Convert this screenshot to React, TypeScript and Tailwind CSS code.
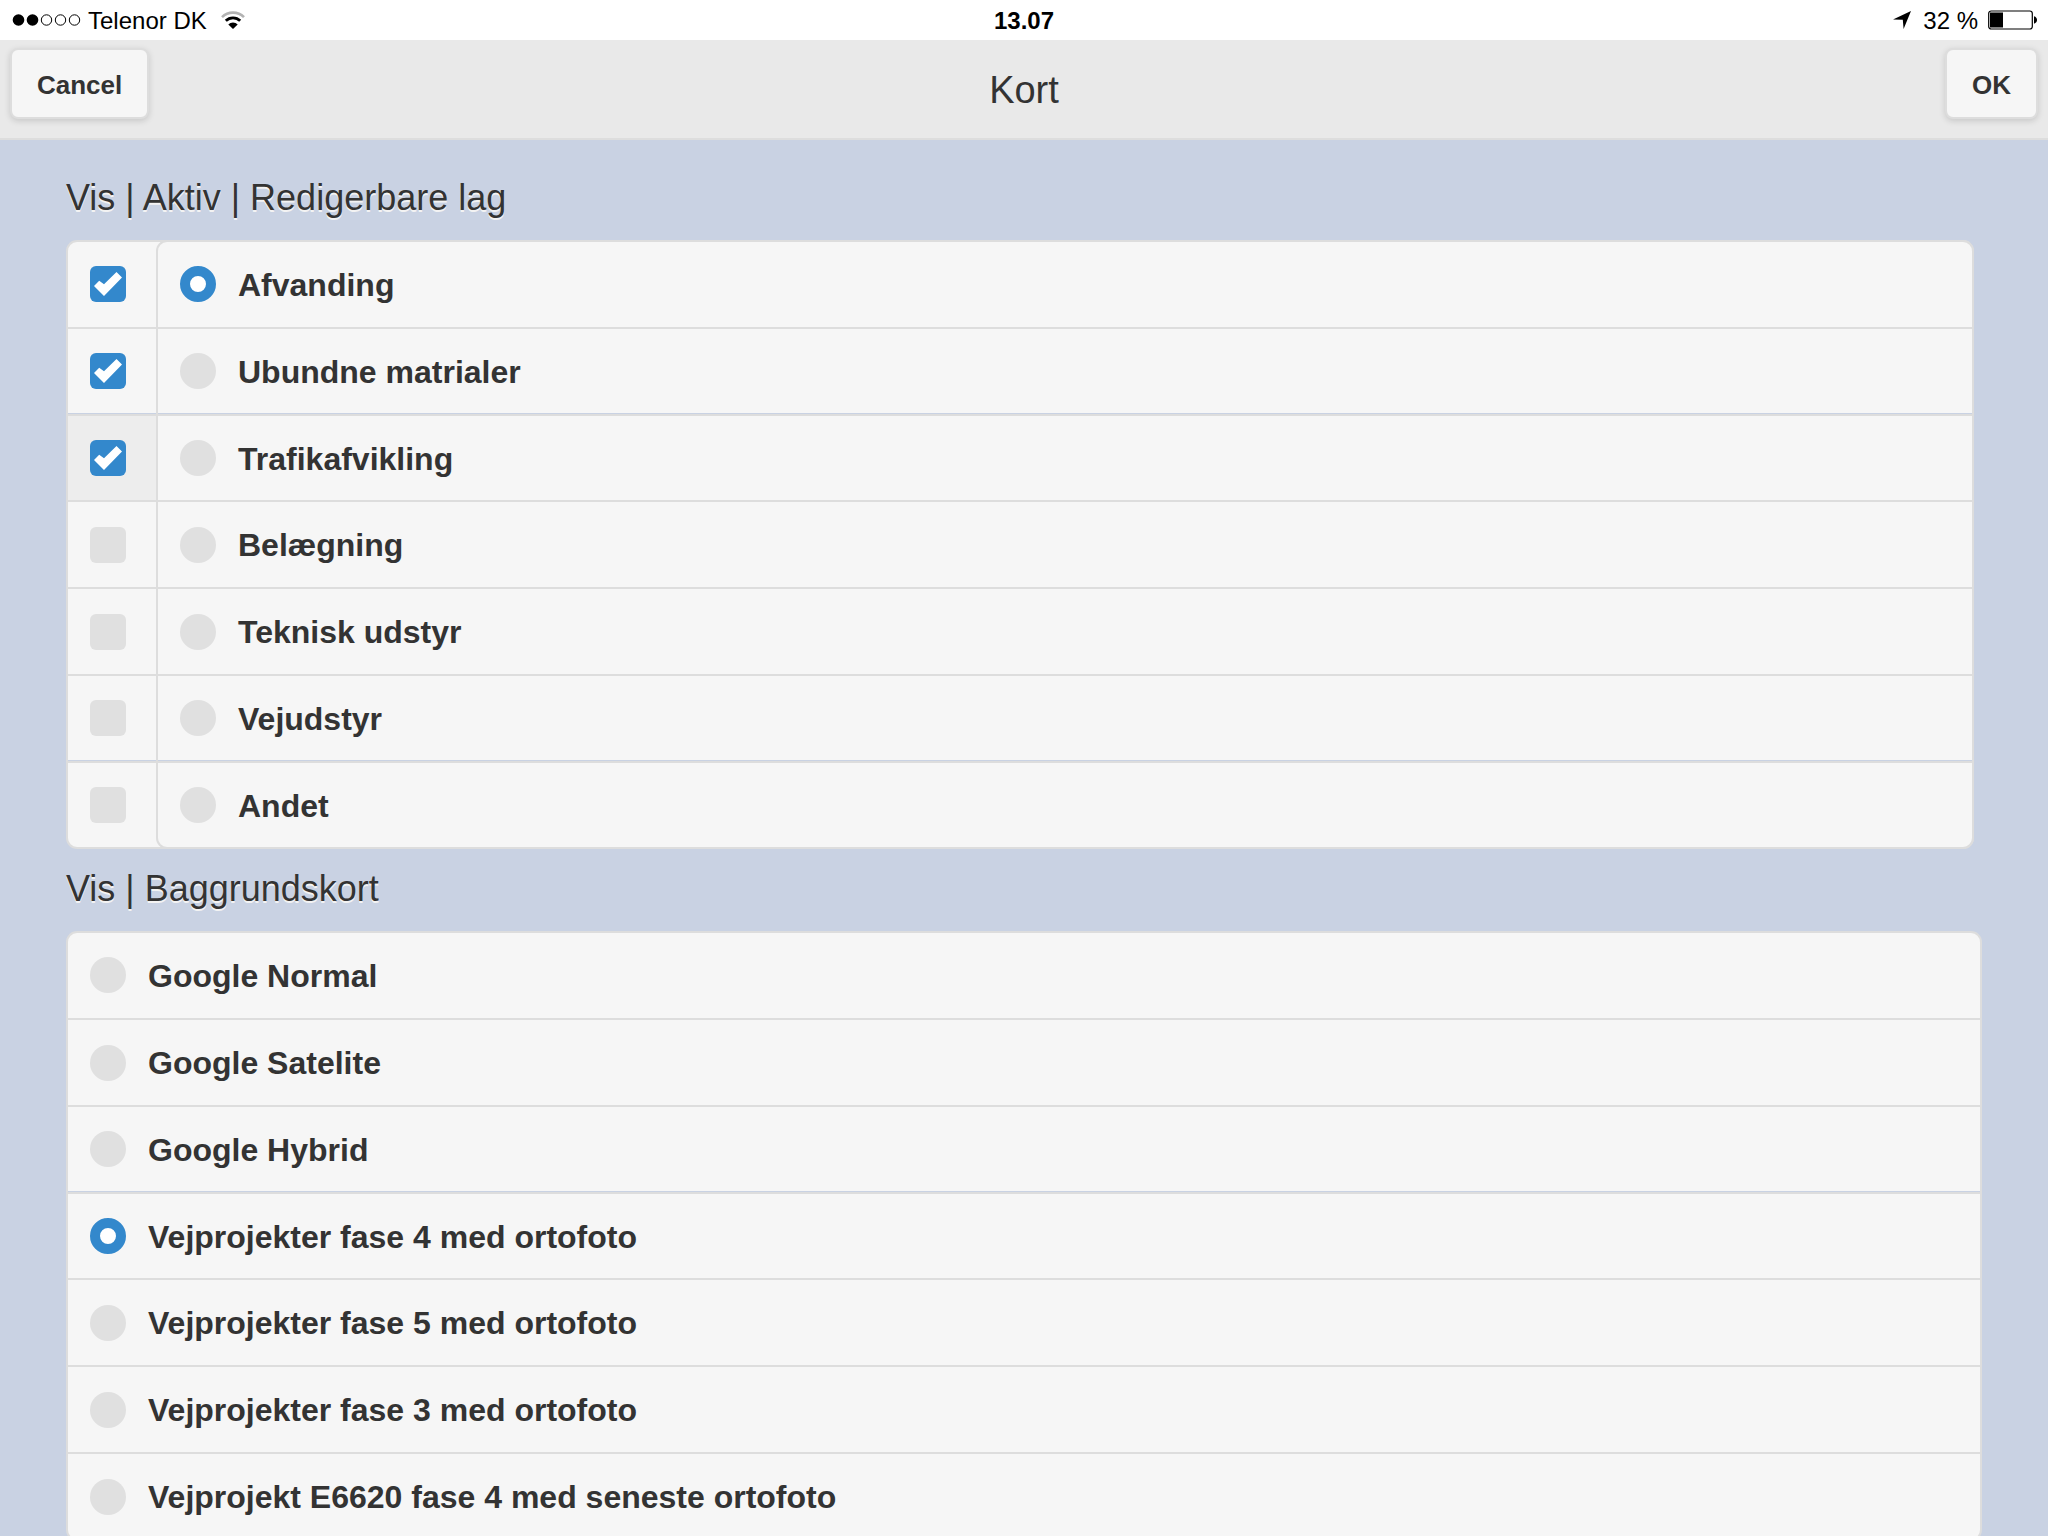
// Map settings screen: editable layers on top, background maps below.

import { useState } from 'react';
import clsx from 'clsx';

type Option = {
  id: string;
  label: string;
  // seam rows end in a hairline of the page colour
  seam?: boolean;
  short?: boolean;
};

const LAYERS: Option[] = [
  { id: 'afvanding', label: 'Afvanding' },
  { id: 'ubundne', label: 'Ubundne matrialer', seam: true },
  { id: 'trafik', label: 'Trafikafvikling', short: true },
  { id: 'belaegning', label: 'Belægning' },
  { id: 'teknisk', label: 'Teknisk udstyr' },
  { id: 'vejudstyr', label: 'Vejudstyr', seam: true },
  { id: 'andet', label: 'Andet', short: true },
];

const BACKGROUNDS: Option[] = [
  { id: 'g-normal', label: 'Google Normal' },
  { id: 'g-satelite', label: 'Google Satelite' },
  { id: 'g-hybrid', label: 'Google Hybrid', seam: true },
  { id: 'fase4', label: 'Vejprojekter fase 4 med ortofoto', short: true },
  { id: 'fase5', label: 'Vejprojekter fase 5 med ortofoto' },
  { id: 'fase3', label: 'Vejprojekter fase 3 med ortofoto' },
  { id: 'e6620', label: 'Vejprojekt E6620 fase 4 med seneste ortofoto' },
];

function rowClass(option: Option, first: boolean) {
  return clsx(
    'flex items-center pl-[22px] cursor-pointer',
    // the first row has the panel's own border above it
    first && 'h-[85px] pb-px',
    !first && 'border-t-2 border-t-[#dddddd]',
    !first && (option.short ? 'h-[86px]' : 'h-[87px]'),
    option.seam && 'border-b border-b-[#c9d2e3]',
  );
}

function StatusBar() {
  return (
    <div className="grid grid-cols-3 items-center h-10 bg-white text-black text-[24px] leading-[38px]">
      <div className="flex items-center pl-3">
        <svg width="70" height="14" viewBox="0 0 70 14" aria-hidden="true">
          <circle cx="6.5" cy="7" r="5.8" />
          <circle cx="20.5" cy="7" r="5.8" />
          <g fill="none" stroke="#000" strokeWidth="1">
            <circle cx="34.5" cy="7" r="5.2" />
            <circle cx="48.5" cy="7" r="5.2" />
            <circle cx="62.5" cy="7" r="5.2" />
          </g>
        </svg>
        <span className="ml-1.5 pt-0.5">Telenor DK</span>
        <svg className="ml-3.5" width="24" height="18" viewBox="0 0 24 18" aria-hidden="true">
          <path d="M1 6.2 A15.5 15.5 0 0 1 23 6.2" fill="none" stroke="#b3b3b3" strokeWidth="2.6" />
          <path d="M4.8 9.8 A10.2 10.2 0 0 1 19.2 9.8" fill="none" stroke="#000" strokeWidth="2.8" />
          <path d="M12 18 L7.3 13.4 A6.7 6.7 0 0 1 16.7 13.4 Z" />
        </svg>
      </div>
      <div className="pt-0.5 text-center font-bold">13.07</div>
      <div className="flex items-center justify-end pr-[11px]">
        <svg width="18" height="18" viewBox="0 0 18 18" aria-hidden="true">
          <path d="M0 8.4 L18 0 L10.6 18 L9.8 8.8 Z" />
        </svg>
        <span className="ml-3 pt-0.5">32 %</span>
        <svg className="ml-2.5" width="49" height="20" viewBox="0 0 49 20" aria-hidden="true">
          <rect x="0.7" y="1" width="43.6" height="18" rx="2.5" fill="none" stroke="#000" strokeWidth="1.2" />
          <rect x="2" y="2.5" width="13" height="15" />
          <path d="M46 6.3 C50 7.5 50 12.5 46 13.7 Z" />
        </svg>
      </div>
    </div>
  );
}

function HeaderButton({ children }: { children: string }) {
  return (
    <button
      type="button"
      className="h-[71px] px-[25px] pt-0.5 rounded-lg border-2 border-[#dddddd] bg-[#f6f6f6] text-[26px] leading-8 font-bold shadow-[0_2px_6px_rgba(0,0,0,0.15)]"
    >
      {children}
    </button>
  );
}

function Header() {
  return (
    <header className="grid grid-cols-[1fr_auto_1fr] items-start h-[100px] px-2.5 pt-2 bg-[#e9e9e9] border-b-2 border-[#dddddd]">
      <div className="flex">
        <HeaderButton>Cancel</HeaderButton>
      </div>
      <h1 className="pt-5 text-[38px] leading-[44px]">Kort</h1>
      <div className="flex justify-end">
        <HeaderButton>OK</HeaderButton>
      </div>
    </header>
  );
}

function SectionTitle({ id, children }: { id: string; children: string }) {
  return (
    <h2 id={id} className="text-[36px] leading-[44px] [text-shadow:0_2px_0_#f3f3f3]">
      {children}
    </h2>
  );
}

type RadioListProps = {
  name: string;
  labelledBy: string;
  options: Option[];
  value: string;
  onChange: (id: string) => void;
  className?: string;
};

function RadioList({ name, labelledBy, options, value, onChange, className }: RadioListProps) {
  return (
    <div
      role="radiogroup"
      aria-labelledby={labelledBy}
      className={clsx('rounded-[11px] border-2 border-[#dddddd] bg-[#f6f6f6]', className)}
    >
      {options.map((option, i) => (
        <label key={option.id} className={rowClass(option, i === 0)}>
          <input
            type="radio"
            name={name}
            checked={value === option.id}
            onChange={() => onChange(option.id)}
            className="appearance-none shrink-0 size-9 rounded-full bg-[#e0e0e0] checked:bg-white checked:border-[10px] checked:border-[#3388cc]"
          />
          <span className="ml-[22px] pt-px text-[32px] leading-10 font-bold">{option.label}</span>
        </label>
      ))}
    </div>
  );
}

function LayerToggles({ visible, onToggle }: { visible: string[]; onToggle: (id: string) => void }) {
  return (
    <div className="w-[88px]">
      {LAYERS.map((layer, i) => (
        <label
          key={layer.id}
          className={clsx(rowClass(layer, i === 0), layer.id === 'trafik' && 'bg-[#ededed]')}
        >
          <span className="grid size-9">
            <input
              type="checkbox"
              aria-label={`Vis ${layer.label}`}
              checked={visible.includes(layer.id)}
              onChange={() => onToggle(layer.id)}
              className="peer appearance-none col-start-1 row-start-1 size-9 rounded-md bg-[#e0e0e0] checked:bg-[#3388cc]"
            />
            <svg
              className="hidden peer-checked:block pointer-events-none col-start-1 row-start-1"
              width="36"
              height="36"
              viewBox="0 0 36 36"
              fill="#fff"
              aria-hidden="true"
            >
              <path d="M4 20 L9.2 14.8 L14 18.2 L26.5 6 L32 11.4 L14 30 Z" />
            </svg>
          </span>
        </label>
      ))}
    </div>
  );
}

export default function App() {
  const [visible, setVisible] = useState(['afvanding', 'ubundne', 'trafik']);
  const [active, setActive] = useState('afvanding');
  const [background, setBackground] = useState('fase4');

  const toggle = (id: string) =>
    setVisible((ids) => (ids.includes(id) ? ids.filter((x) => x !== id) : [...ids, id]));

  return (
    <div className="flex flex-col h-screen overflow-hidden bg-[#c9d2e3] text-[#333333] font-['Liberation_Sans',Arial,sans-serif]">
      <StatusBar />
      <Header />
      <main className="flex-1 min-h-0 overflow-hidden pt-9 px-[66px]">
        <section>
          <SectionTitle id="layers-title">Vis | Aktiv | Redigerbare lag</SectionTitle>
          <div className="flex mt-5 mr-2 rounded-[11px] border-2 border-[#dddddd] bg-[#f6f6f6]">
            <LayerToggles visible={visible} onToggle={toggle} />
            <RadioList
              name="active-layer"
              labelledBy="layers-title"
              options={LAYERS}
              value={active}
              onChange={setActive}
              className="flex-1 -my-0.5 -mr-0.5"
            />
          </div>
        </section>
        <section className="mt-[18px]">
          <SectionTitle id="backgrounds-title">Vis | Baggrundskort</SectionTitle>
          <RadioList
            name="background"
            labelledBy="backgrounds-title"
            options={BACKGROUNDS}
            value={background}
            onChange={setBackground}
            className="mt-5"
          />
        </section>
      </main>
    </div>
  );
}
